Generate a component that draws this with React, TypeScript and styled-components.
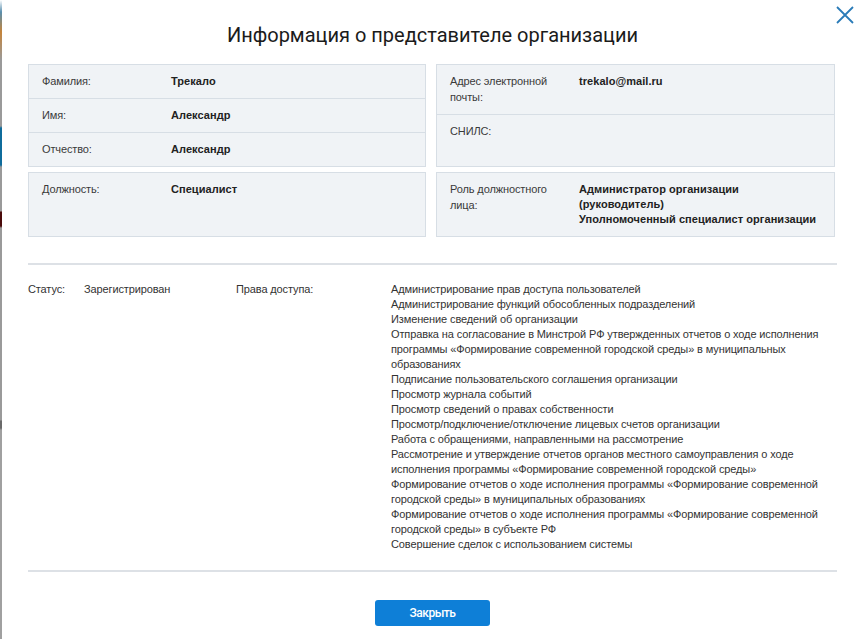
import React from "react";
import styled, { createGlobalStyle } from "styled-components";

const GlobalStyle = createGlobalStyle`
  html, body {
    margin: 0;
    padding: 0;
    background: #ffffff;
  }
  body {
    font-family: "Liberation Sans", Arial, sans-serif;
    color: #333333;
  }
`;

const Screen = styled.div`
  display: flex;
  width: 861px;
  height: 639px;
  overflow: hidden;
  background: #ffffff;
`;

const PageEdge = styled.div`
  width: 2px;
  flex-shrink: 0;
  background: linear-gradient(
    to bottom,
    #ffffff 0px,
    #5a8fae 12px,
    #c5843a 32px,
    #9a9a9a 60px,
    #9a9a9a 126px,
    #0f6c9c 128px,
    #0f6c9c 165px,
    #9a9a9a 167px,
    #9a9a9a 211px,
    #4a0a0a 212px,
    #4a0a0a 226px,
    #9a9a9a 228px,
    #9a9a9a 420px,
    #6a6a6a 421px,
    #6a6a6a 428px,
    #a0a0a0 430px
  );
`;

const Modal = styled.div`
  position: relative;
  flex: 1;
  padding: 0 24px 0 26px;
  letter-spacing: -0.12px;
`;

const Header = styled.div`
  display: flex;
  justify-content: center;
  padding: 22px 0 16px;
`;

const Title = styled.h1`
  margin: 0;
  font-family: Roboto, "Liberation Sans", sans-serif;
  font-weight: 400;
  font-size: 20px;
  line-height: 26px;
  letter-spacing: 0;
  color: #1b1b1b;
`;

const CloseIcon = styled.button`
  position: absolute;
  top: 5px;
  right: 6px;
  width: 20px;
  height: 20px;
  padding: 0;
  border: 0;
  background: transparent;
  cursor: pointer;
  display: flex;
  align-items: center;
  justify-content: center;
`;

const CardGrid = styled.div`
  display: grid;
  grid-template-columns: 398px 399px;
  column-gap: 10px;
  row-gap: 5px;
`;

const Card = styled.div`
  display: flex;
  flex-direction: column;
  background: #f0f3f6;
  border: 1px solid #d7dee5;
`;

const Row = styled.div<{ $grow?: boolean }>`
  display: grid;
  grid-template-columns: 129px 1fr;
  padding: 8px 14px 9px 13px;
  flex: ${(p) => (p.$grow ? 1 : "none")};
  border-bottom: 1px solid #d7dee5;

  &:last-child {
    border-bottom: 0;
  }
`;

const Label = styled.div`
  font-size: 11px;
  line-height: 16px;
  color: #3a3a3a;
  padding-right: 8px;
`;

const Value = styled.div`
  font-size: 11px;
  line-height: 15px;
  font-weight: 700;
  letter-spacing: 0.05px;
  color: #222222;
  padding-top: 1px;
`;

const Divider = styled.hr`
  margin: 0;
  border: 0;
  border-top: 2px solid #dde1e6;
`;

const StatusSection = styled.div`
  margin-top: 26px;
`;

const StatusGrid = styled.div`
  display: grid;
  grid-template-columns: 56px 152px 155px 444px;
  padding: 17px 0 18px;
  font-size: 11px;
  line-height: 15px;
  color: #333333;
`;

const RightsList = styled.ul`
  margin: 0;
  padding: 0;
  list-style: none;
`;

const Footer = styled.div`
  display: flex;
  justify-content: center;
  padding-top: 28px;
`;

const CloseButton = styled.button`
  width: 115px;
  height: 26px;
  border: 0;
  border-radius: 3px;
  background: #0e7fd7;
  color: #ffffff;
  font-family: Roboto, "Liberation Sans", sans-serif;
  font-size: 12px;
  font-weight: 500;
  letter-spacing: -0.5px;
  cursor: pointer;
`;

const rights = [
  "Администрирование прав доступа пользователей",
  "Администрирование функций обособленных подразделений",
  "Изменение сведений об организации",
  "Отправка на согласование в Минстрой РФ утвержденных отчетов о ходе исполнения программы «Формирование современной городской среды» в муниципальных образованиях",
  "Подписание пользовательского соглашения организации",
  "Просмотр журнала событий",
  "Просмотр сведений о правах собственности",
  "Просмотр/подключение/отключение лицевых счетов организации",
  "Работа с обращениями, направленными на рассмотрение",
  "Рассмотрение и утверждение отчетов органов местного самоуправления о ходе исполнения программы «Формирование современной городской среды»",
  "Формирование отчетов о ходе исполнения программы «Формирование современной городской среды» в муниципальных образованиях",
  "Формирование отчетов о ходе исполнения программы «Формирование современной городской среды» в субъекте РФ",
  "Совершение сделок с использованием системы",
];

const App = () => {
  return (
    <>
      <GlobalStyle />
      <Screen>
        <PageEdge />
        <Modal>
          <Header>
            <Title>Информация о представителе организации</Title>
          </Header>
          <CloseIcon aria-label="Закрыть">
            <svg width="18" height="18" viewBox="0 0 18 18">
              <path
                d="M1 1 L17 17 M17 1 L1 17"
                stroke="#2a7bb8"
                strokeWidth="1.8"
                fill="none"
              />
            </svg>
          </CloseIcon>

          <CardGrid>
            <Card>
              <Row>
                <Label>Фамилия:</Label>
                <Value>Трекало</Value>
              </Row>
              <Row>
                <Label>Имя:</Label>
                <Value>Александр</Value>
              </Row>
              <Row>
                <Label>Отчество:</Label>
                <Value>Александр</Value>
              </Row>
            </Card>
            <Card>
              <Row>
                <Label>Адрес электронной почты:</Label>
                <Value>trekalo@mail.ru</Value>
              </Row>
              <Row $grow>
                <Label>СНИЛС:</Label>
                <Value></Value>
              </Row>
            </Card>
            <Card>
              <Row $grow>
                <Label>Должность:</Label>
                <Value>Специалист</Value>
              </Row>
            </Card>
            <Card>
              <Row $grow>
                <Label>Роль должностного лица:</Label>
                <Value>
                  Администратор организации (руководитель)
                  <br />
                  Уполномоченный специалист организации
                </Value>
              </Row>
            </Card>
          </CardGrid>

          <StatusSection>
            <Divider />
            <StatusGrid>
              <div>Статус:</div>
              <div>Зарегистрирован</div>
              <div>Права доступа:</div>
              <RightsList>
                {rights.map((r) => (
                  <li key={r}>{r}</li>
                ))}
              </RightsList>
            </StatusGrid>
            <Divider />
          </StatusSection>

          <Footer>
            <CloseButton>Закрыть</CloseButton>
          </Footer>
        </Modal>
      </Screen>
    </>
  );
};

export default App;
